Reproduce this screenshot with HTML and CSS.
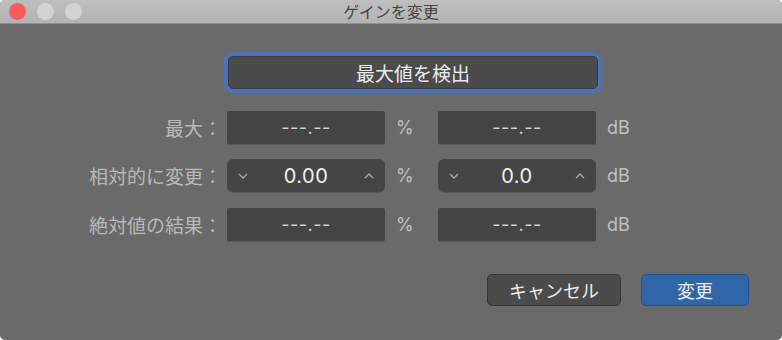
FILE: index.html
```html
<!DOCTYPE html>
<html lang="ja">
<head>
<meta charset="utf-8">
<title>ゲインを変更</title>
<link rel="stylesheet" href="styles.css">
</head>
<body>
<div class="window">
  <div class="titlebar">
    <div class="lights">
      <span class="light red"></span>
      <span class="light"></span>
      <span class="light"></span>
    </div>
    <div class="title">ゲインを変更</div>
  </div>
  <div class="content">
    <div class="detect-row">
      <button class="detect">最大値を検出</button>
    </div>
    <div class="grid">
      <div class="label">最大：</div>
      <div class="field">---.--</div>
      <div class="unit">%</div>
      <div class="field">---.--</div>
      <div class="unit">dB</div>

      <div class="label">相対的に変更：</div>
      <div class="field stepper">
        <svg class="chev" width="10" height="6" viewBox="0 0 10 6"><path d="M1 1 L5 5 L9 1" fill="none" stroke="#a8a8a8" stroke-width="1.4"/></svg>
        <span class="val">0.00</span>
        <svg class="chev" width="10" height="6" viewBox="0 0 10 6"><path d="M1 5 L5 1 L9 5" fill="none" stroke="#a8a8a8" stroke-width="1.4"/></svg>
      </div>
      <div class="unit">%</div>
      <div class="field stepper">
        <svg class="chev" width="10" height="6" viewBox="0 0 10 6"><path d="M1 1 L5 5 L9 1" fill="none" stroke="#a8a8a8" stroke-width="1.4"/></svg>
        <span class="val">0.0</span>
        <svg class="chev" width="10" height="6" viewBox="0 0 10 6"><path d="M1 5 L5 1 L9 5" fill="none" stroke="#a8a8a8" stroke-width="1.4"/></svg>
      </div>
      <div class="unit">dB</div>

      <div class="label">絶対値の結果：</div>
      <div class="field">---.--</div>
      <div class="unit">%</div>
      <div class="field">---.--</div>
      <div class="unit">dB</div>
    </div>
    <div class="actions">
      <button class="btn cancel">キャンセル</button>
      <button class="btn ok">変更</button>
    </div>
  </div>
</div>
</body>
</html>
```
FILE: styles.css
```css
html, body {
  margin: 0;
  padding: 0;
  background: #ffffff;
}
body {
  font-family: Inter, "Noto Sans CJK JP", sans-serif;
  width: 782px;
  height: 340px;
  overflow: hidden;
}
.window {
  width: 782px;
  height: 340px;
  background: #6a6a6a;
  border-radius: 5px;
  overflow: hidden;
  display: flex;
  flex-direction: column;
}
.titlebar {
  height: 23px;
  background: linear-gradient(#bebebe, #b3b3b3);
  border-bottom: 1px solid #8f8f8f;
  position: relative;
  display: flex;
  align-items: center;
  justify-content: center;
}
.lights {
  position: absolute;
  left: 9px;
  top: 3px;
  display: flex;
  gap: 11px;
}
.light {
  width: 17px;
  height: 17px;
  border-radius: 50%;
  background: #d3d3d3;
}
.light.red {
  background: #fc5b57;
}
.title {
  font-family: "Noto Sans CJK JP", sans-serif;
  font-size: 16px;
  color: #454545;
  line-height: 23px;
}
.content {
  flex: 1;
  display: flex;
  flex-direction: column;
  padding: 32px 33px 0 0;
}
.detect-row {
  display: flex;
  padding-left: 228px;
  width: 370px;
  margin-bottom: 21.5px;
}
.detect {
  flex: 1;
  height: 33px;
  background: #4b4b4b;
  border: 1px solid #3a3a3a;
  border-radius: 5px;
  box-shadow: 0 0 0 4px #4d72bd;
  color: #ececec;
  font-family: "Noto Sans CJK JP", sans-serif;
  font-size: 19px;
  padding: 0;
}
.grid {
  display: grid;
  grid-template-columns: 227px 158px 53px 158px auto;
  grid-auto-rows: 33px;
  row-gap: 15.5px;
  align-items: center;
}
.label {
  text-align: right;
  padding-right: 5px;
  color: #b9b9b9;
  font-family: "Noto Sans CJK JP", sans-serif;
  font-size: 19px;
  line-height: 33px;
  white-space: nowrap;
}
.field {
  height: 33px;
  background: #444444;
  border-radius: 2px;
  box-shadow: 0 1px 0 #5a5a5a;
  color: #d4d4d4;
  font-size: 18px;
  display: flex;
  align-items: center;
  justify-content: center;
  letter-spacing: 0.5px;
}
.field.stepper {
  border-radius: 6px;
  background: #454545;
  justify-content: space-between;
  padding: 0 11px;
  box-sizing: border-box;
}
.stepper .val {
  color: #f0f0f0;
  font-size: 20px;
  letter-spacing: 0.5px;
}
.chev {
  display: block;
}
.unit {
  color: #c0c0c0;
  font-size: 18px;
  padding-left: 11px;
}
.actions {
  display: flex;
  justify-content: flex-end;
  gap: 20px;
  margin-top: 33px;
}
.btn {
  height: 32px;
  border-radius: 5px;
  font-family: "Noto Sans CJK JP", sans-serif;
  font-size: 18px;
  padding: 0;
  color: #ececec;
}
.cancel {
  width: 134px;
  background: #4b4b4b;
  border: 1px solid #363636;
}
.ok {
  width: 108px;
  background: #3065a8;
  border: 1px solid #27518a;
}
```
